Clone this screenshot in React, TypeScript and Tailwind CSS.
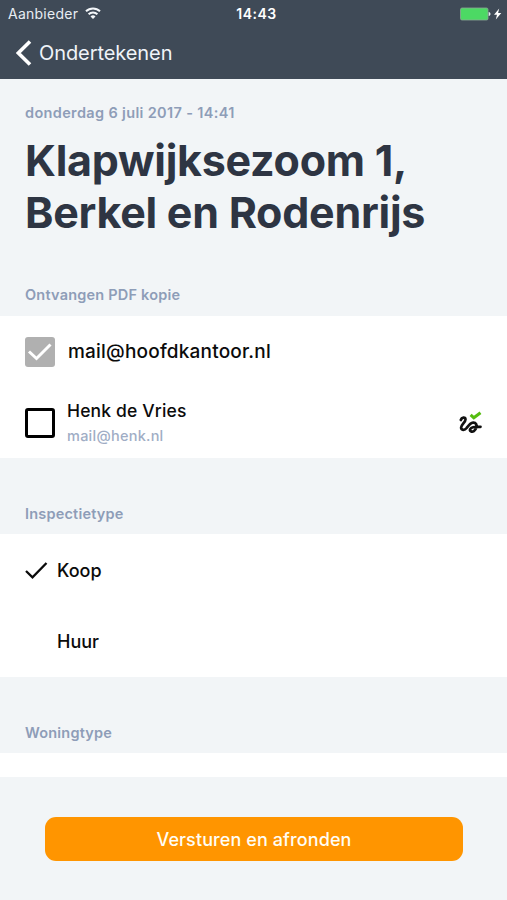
import type { ReactNode } from "react";

const inspectionTypes = [
  { label: "Koop", selected: true },
  { label: "Huur", selected: false },
];

function StatusBar() {
  return (
    <div className="grid h-7 grid-cols-3 items-center pr-[5px] pb-px pl-2">
      <div className="flex items-center gap-[7px] text-[14px] tracking-[0.25px] text-[#e8edf3]">
        <span>Aanbieder</span>
        <svg className="mb-0.5 h-3 w-4" viewBox="0 0 16 12" fill="none" stroke="#f4f7fa" strokeWidth="2" aria-hidden="true">
          <path d="M1 4.3a10 10 0 0 1 14 0" />
          <path d="M3.6 7.3a6.3 6.3 0 0 1 8.8 0" />
          <path d="M8 12 5.5 9.5a3.5 3.5 0 0 1 5 0Z" fill="#f4f7fa" stroke="none" />
        </svg>
      </div>
      <span className="pl-[3px] text-center text-[14px] font-semibold tracking-[0.5px] text-white">14:43</span>
      <svg className="h-3.5 w-[42px] justify-self-end" viewBox="0 0 42 14" aria-hidden="true">
        <rect x="0.5" y="1" width="27.5" height="12" rx="1.5" fill="#4cd964" stroke="#8aa895" strokeWidth="0.8" />
        <path d="M28.7 5c2.4.6 2.4 3.4 0 4Z" fill="#e8edf3" />
        <path d="M39.2 1.5 34 7.7h3l-1.2 4.8L41.3 6h-3.2Z" fill="#fff" />
      </svg>
    </div>
  );
}

function Header() {
  return (
    <header className="h-[79px] shrink-0 bg-[#3f4a57]">
      <StatusBar />
      <button className="flex h-[50px] items-center gap-[7px] pl-4 text-[20px] tracking-[-0.08px] text-[#f0f4f9]">
        <svg className="h-[26px] w-4" viewBox="0 0 16 26" fill="none" stroke="#fff" strokeWidth="3.6" aria-hidden="true">
          <path d="M14 1.5 2.3 13 14 24.5" />
        </svg>
        <span>Ondertekenen</span>
      </button>
    </header>
  );
}

function SectionLabel({ children }: { children: ReactNode }) {
  return (
    <h2 className="px-[25px] pb-2.5 text-[14.5px] leading-5 font-semibold tracking-[0.2px] text-[#8e9db8]">
      {children}
    </h2>
  );
}

function SignatureIcon() {
  return (
    <svg className="h-6 w-6 overflow-visible" viewBox="0 0 24 24" fill="none" strokeLinecap="round" strokeLinejoin="round" aria-hidden="true">
      <path
        d="M2.8 9C3.6 6.4 7.5 5.6 7.5 8.4c0 2.8-4.4 5.2-4.4 8.2 0 2.8 3.6 2.9 5.5.4 1.8-2.5 3.7-5.2 6.5-5.4 3-.2 4.1 2.5 3.2 5.1-1 3.3-3.6 4.6-5.4 3.6-1.9-1.1-.6-3.3 2-4 2.3-.7 5-.5 7.6-.5"
        stroke="#111"
        strokeWidth="2.7"
      />
      <path d="m12.6 3.9 3.2 2.8 6.7-5" stroke="#55bd10" strokeWidth="3" strokeLinecap="butt" strokeLinejoin="miter" />
    </svg>
  );
}

export default function App() {
  return (
    <div className="flex h-[900px] w-full flex-col overflow-hidden bg-[#f2f5f7] font-['Inter',sans-serif] text-[#0b0b0b]">
      <Header />

      <main className="flex flex-1 flex-col">
        <div className="h-[206px] px-[25px] pt-6">
          <p className="text-[14.5px] leading-5 font-semibold tracking-[0.35px] text-[#8e9db8]">
            donderdag 6 juli 2017 - 14:41
          </p>
          <h1 className="mt-[11px] text-[43px] leading-[52px] font-bold tracking-[-0.26px] whitespace-nowrap text-[#2e3543]">
            Klapwijksezoom 1,
            <br />
            Berkel en Rodenrijs
          </h1>
        </div>

        {/* PDF recipients */}
        <SectionLabel>Ontvangen PDF kopie</SectionLabel>
        <div className="mt-px h-[142px] bg-white px-[25px]">
          <div className="flex h-[71px] items-center gap-[13px]">
            <svg className="h-[30px] w-[30px]" viewBox="0 0 30 30" aria-hidden="true">
              <rect width="30" height="30" rx="3" fill="#b0b0b0" />
              <path d="m4 14.5 7.5 7L25.5 7.5" fill="none" stroke="#fff" strokeWidth="3" />
            </svg>
            <span className="pt-0.5 text-[19px] font-medium tracking-[0.2px]">mail@hoofdkantoor.nl</span>
          </div>
          <div className="flex h-[71px] items-center gap-3">
            <div className="h-[30px] w-[30px] rounded-[3px] border-3 border-black" />
            <div className="flex flex-1 flex-col pt-0.5">
              <span className="text-[17.5px] leading-6 font-medium tracking-[0.15px]">Henk de Vries</span>
              <span className="text-[14.5px] leading-[26px] font-medium tracking-[0.25px] text-[#a0adc5]">mail@henk.nl</span>
            </div>
            <SignatureIcon />
          </div>
        </div>

        {/* Inspection type */}
        <div className="pt-[46px]">
          <SectionLabel>Inspectietype</SectionLabel>
        </div>
        <div className="h-[143px] bg-white px-[25px] pt-px">
          {inspectionTypes.map((type) => (
            <div key={type.label} className="flex h-[71px] items-center">
              <div className="w-8">
                {type.selected && (
                  <svg className="h-[18px] w-[23px]" viewBox="0 0 23 18" fill="none" stroke="#0b0b0b" strokeWidth="2.3" aria-hidden="true">
                    <path d="m1 9 6.5 6.3L21.5 1" />
                  </svg>
                )}
              </div>
              <span className="text-[18px] font-medium">{type.label}</span>
            </div>
          ))}
        </div>

        <div className="pt-[46px]">
          <SectionLabel>Woningtype</SectionLabel>
        </div>
        <div className="h-6 bg-white" />
      </main>

      <footer className="h-[123px] shrink-0 pt-10 pr-11 pl-[45px]">
        <button className="h-11 w-full rounded-[11px] bg-[#ff9500] text-[18px] font-medium tracking-[0.1px] text-[#fffdf5]">
          Versturen en afronden
        </button>
      </footer>
    </div>
  );
}
